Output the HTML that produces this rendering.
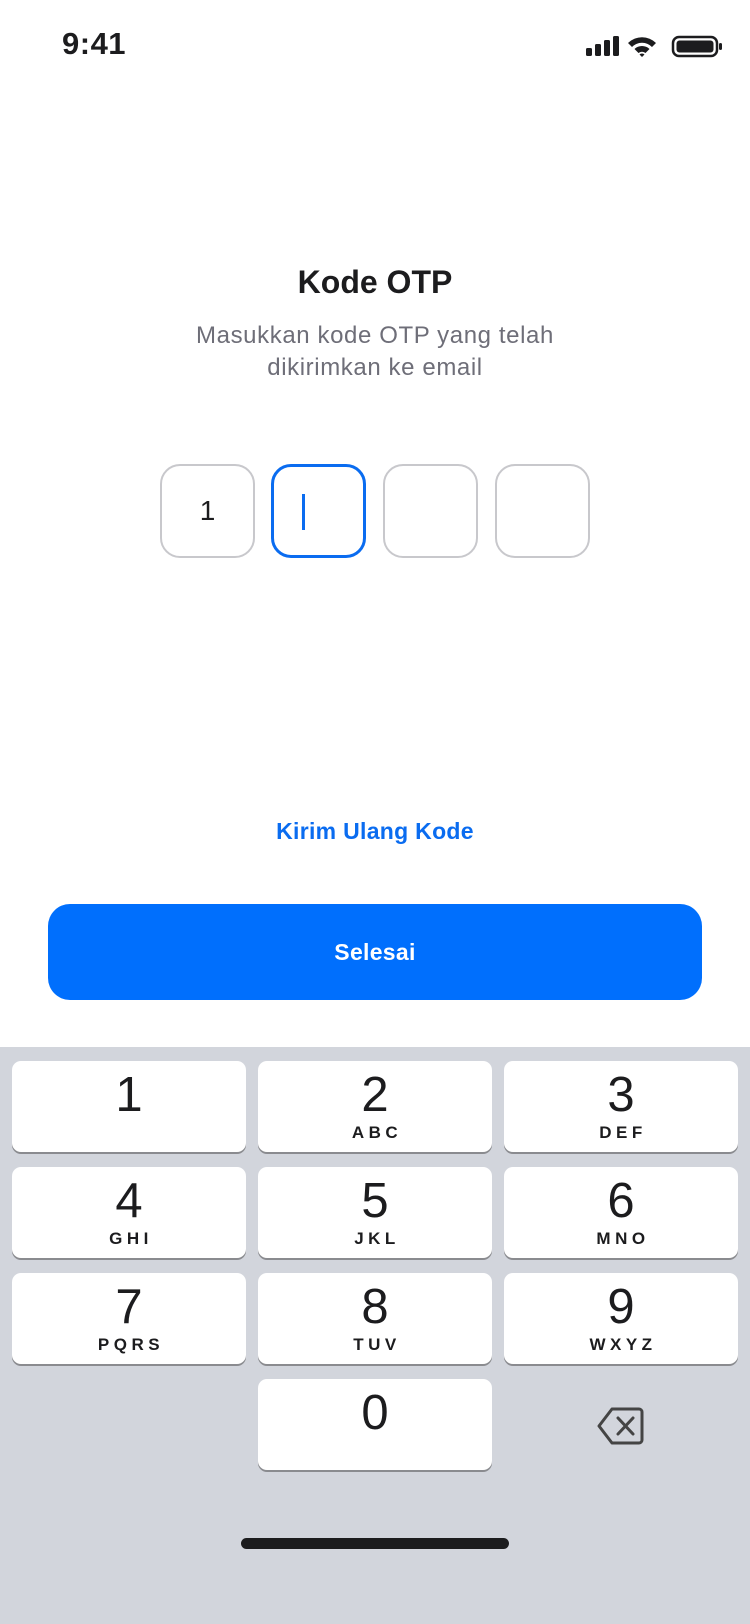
<!DOCTYPE html>
<html><head><meta charset="utf-8"><style>
*{margin:0;padding:0;box-sizing:border-box}
body{width:750px;height:1624px;background:#fff;font-family:"Liberation Sans",sans-serif;position:relative;overflow:hidden;color:#1c1c1e}
.abs{position:absolute}
.time{left:62px;top:26px;font-size:31px;font-weight:bold;letter-spacing:0.5px}
.title{left:0;width:750px;top:264px;text-align:center;font-size:32px;font-weight:bold}
.sub{left:0;width:750px;top:320px;text-align:center;font-size:24px;letter-spacing:0.6px;line-height:32px;color:#6e6e78}
.box{top:464px;width:95px;height:94px;border:2px solid #c8c8cc;border-radius:20px;font-size:28px;text-align:center;line-height:90px}
.act{border:3px solid #0a6cf0}
.link{left:0;width:750px;top:818px;text-align:center;color:#0a6cf0;font-size:23px;letter-spacing:0.3px;font-weight:bold}
.btn{left:48px;top:904px;width:654px;height:96px;background:#006ffd;border-radius:22px;color:#fff;font-size:23px;letter-spacing:0.3px;font-weight:bold;text-align:center;line-height:96px}
.kb{left:0;top:1047px;width:750px;height:577px;background:#d2d5dc}
.key{width:234px;height:91px;background:#fff;border-radius:9px;box-shadow:0 2px 0 #8a8b8f;text-align:center}
.key b{display:block;font-weight:normal;font-size:49px;line-height:50px;padding-top:9px}
.key i{display:block;font-style:normal;font-weight:bold;font-size:17px;letter-spacing:4.5px;padding-left:4px;margin-top:3px}
.home{left:241px;top:1538px;width:268px;height:11px;border-radius:6px;background:#1c1c1e}
</style></head><body>
<div class="abs time">9:41</div>
<svg class="abs" style="left:586px;top:34px" width="136" height="26" viewBox="0 0 136 26">
<rect x="0" y="14" width="6" height="8" rx="1.5" fill="#1c1c1e"/>
<rect x="9" y="10" width="6" height="12" rx="1.5" fill="#1c1c1e"/>
<rect x="18" y="6" width="6" height="16" rx="1.5" fill="#1c1c1e"/>
<rect x="27" y="2" width="6" height="20" rx="1.5" fill="#1c1c1e"/>
<path d="M42 9 A20 20 0 0 1 70 9 L66 13 A14 14 0 0 0 46 13 Z" fill="#1c1c1e"/>
<path d="M48.5 15 A11 11 0 0 1 63.5 15 L59.5 19 A5.5 5.5 0 0 0 52.5 19 Z" fill="#1c1c1e"/>
<path d="M53.5 20.5 L56 23 L58.5 20.5 A3.5 3.5 0 0 0 53.5 20.5Z" fill="#1c1c1e"/>
<rect x="87" y="3" width="44" height="19" rx="6" fill="none" stroke="#1c1c1e" stroke-width="2.5"/>
<rect x="90.5" y="6.5" width="37" height="12" rx="3" fill="#1c1c1e"/>
<rect x="133" y="9" width="3" height="7" rx="1.5" fill="#1c1c1e"/>
</svg>
<div class="abs title">Kode OTP</div>
<div class="abs sub">Masukkan kode OTP yang telah<br>dikirimkan ke email</div>
<div class="abs box" style="left:160px">1</div>
<div class="abs box act" style="left:271px"><span class="abs" style="left:28px;top:27px;width:3px;height:36px;background:#0a6cf0"></span></div>
<div class="abs box" style="left:383px"></div>
<div class="abs box" style="left:495px"></div>
<div class="abs link">Kirim Ulang Kode</div>
<div class="abs btn">Selesai</div>
<div class="abs kb"></div>
<div class="abs key" style="left:12px;top:1061px"><b>1</b></div>
<div class="abs key" style="left:258px;top:1061px"><b>2</b><i>ABC</i></div>
<div class="abs key" style="left:504px;top:1061px"><b>3</b><i>DEF</i></div>
<div class="abs key" style="left:12px;top:1167px"><b>4</b><i>GHI</i></div>
<div class="abs key" style="left:258px;top:1167px"><b>5</b><i>JKL</i></div>
<div class="abs key" style="left:504px;top:1167px"><b>6</b><i>MNO</i></div>
<div class="abs key" style="left:12px;top:1273px"><b>7</b><i>PQRS</i></div>
<div class="abs key" style="left:258px;top:1273px"><b>8</b><i>TUV</i></div>
<div class="abs key" style="left:504px;top:1273px"><b>9</b><i>WXYZ</i></div>
<div class="abs key" style="left:258px;top:1379px"><b>0</b></div>
<svg class="abs" style="left:596px;top:1406px" width="50" height="40" viewBox="0 0 50 40">
<path d="M16 3 H43 A3 3 0 0 1 46 6 V34 A3 3 0 0 1 43 37 H16 L3 20 Z" fill="none" stroke="#444" stroke-width="3" stroke-linejoin="round"/>
<path d="M22 12 L37 28 M37 12 L22 28" stroke="#444" stroke-width="3" stroke-linecap="round"/>
</svg>
<div class="abs home"></div>
</body></html>
